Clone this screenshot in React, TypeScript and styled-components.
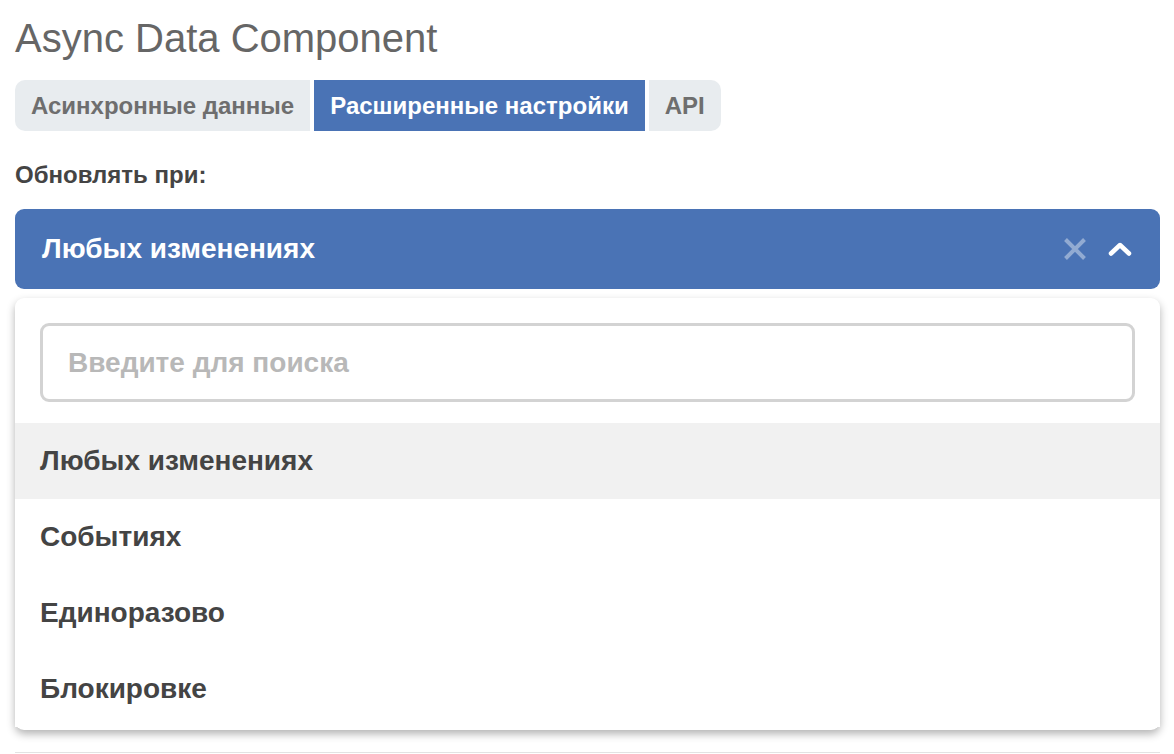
import React, { useState } from "react";
import styled, { createGlobalStyle, css } from "styled-components";

const blue = "#4a73b5";
const grey = "#444444";

const GlobalStyle = createGlobalStyle`
  html, body {
    margin: 0;
    padding: 0;
    background: #ffffff;
    font-family: "Liberation Sans", Arial, sans-serif;
  }
`;

const tabs = ["Асинхронные данные", "Расширенные настройки", "API"];
const options = ["Любых изменениях", "Событиях", "Единоразово", "Блокировке"];

export default function App() {
  const [tab, setTab] = useState(1);
  const [value, setValue] = useState(options[0]);
  return (
    <Page>
      <GlobalStyle />
      <Title>Async Data Component</Title>
      <TabBar>
        {tabs.map((t, i) => (
          <Tab key={t} active={i === tab} onClick={() => setTab(i)}>
            {t}
          </Tab>
        ))}
      </TabBar>
      <Label>Обновлять при:</Label>
      <SelectBox>
        <SelectControl>
          <SelectValue>{value}</SelectValue>
          <Indicators>
            <svg width="24" height="24" viewBox="0 0 24 24">
              <path
                d="M2.5 2.5 L21.5 21.5 M21.5 2.5 L2.5 21.5"
                stroke="rgba(255,255,255,0.4)"
                strokeWidth="4"
              />
            </svg>
            <svg width="24" height="14" viewBox="0 0 24 14">
              <path
                d="M3 11.5 L12 3 L21 11.5"
                stroke="#ffffff"
                strokeWidth="4.5"
                fill="none"
                strokeLinecap="round"
                strokeLinejoin="round"
              />
            </svg>
          </Indicators>
        </SelectControl>
        <Menu>
          <SearchWrap>
            <SearchInput placeholder="Введите для поиска" autoFocus />
          </SearchWrap>
          <OptionList>
            {options.map(o => (
              <Option key={o} focused={o === value} onClick={() => setValue(o)}>
                {o}
              </Option>
            ))}
          </OptionList>
        </Menu>
      </SelectBox>
      <Rule />
    </Page>
  );
}

const Page = styled.div`
  padding: 14px 14px 0 15px;
  display: flex;
  flex-direction: column;
  height: 754px;
  box-sizing: border-box;
  overflow: hidden;
`;

const Title = styled.h1`
  margin: 0;
  font-weight: normal;
  font-size: 40px;
  line-height: 48px;
  color: #666666;
`;

const TabBar = styled.div`
  display: flex;
  gap: 4px;
  margin-top: 18px;
`;

const Tab = styled.div<{ active: boolean }>`
  height: 51px;
  display: flex;
  align-items: center;
  padding: 0 16px;
  font-size: 24px;
  font-weight: bold;
  cursor: pointer;
  background: #e8ecef;
  color: #6e6e6e;
  &:first-child {
    border-radius: 10px 0 0 10px;
  }
  &:last-child {
    border-radius: 0 10px 10px 0;
  }
  ${p =>
    p.active &&
    css`
      background: ${blue};
      color: #ffffff;
    `}
`;

const Label = styled.div`
  margin-top: 30px;
  font-size: 24px;
  font-weight: bold;
  color: ${grey};
  line-height: 28px;
`;

const SelectBox = styled.div`
  margin-top: 20px;
  position: relative;
  width: 1145px;
`;

const SelectControl = styled.div`
  height: 80px;
  background: ${blue};
  border-radius: 9px;
  display: flex;
  align-items: center;
  justify-content: space-between;
  padding: 0 28px 0 27px;
  box-sizing: border-box;
`;

const SelectValue = styled.div`
  color: #ffffff;
  font-size: 28px;
  font-weight: bold;
`;

const Indicators = styled.div`
  display: flex;
  align-items: center;
  gap: 21px;
`;

const Menu = styled.div`
  position: absolute;
  top: 89px;
  left: 0;
  right: 0;
  background: #ffffff;
  border-radius: 9px;
  box-shadow: 0 4px 9px rgba(0, 0, 0, 0.3);
  padding-top: 25px;
  padding-bottom: 3px;
  z-index: 2;
`;

const SearchWrap = styled.div`
  padding: 0 25px;
`;

const SearchInput = styled.input`
  width: 100%;
  box-sizing: border-box;
  height: 79px;
  border: 3px solid #d3d3d3;
  border-radius: 9px;
  padding: 0 25px;
  font-family: "Liberation Sans", Arial, sans-serif;
  font-size: 28px;
  font-weight: bold;
  color: ${grey};
  caret-color: #000000;
  outline: none;
  &::placeholder {
    color: #b8b8b8;
  }
`;

const OptionList = styled.div`
  margin-top: 21px;
  display: flex;
  flex-direction: column;
`;

const Option = styled.div<{ focused: boolean }>`
  height: 76px;
  display: flex;
  align-items: center;
  padding: 0 25px;
  font-size: 28px;
  font-weight: bold;
  color: ${grey};
  cursor: pointer;
  background: ${p => (p.focused ? "#f1f1f1" : "#ffffff")};
`;

const Rule = styled.div`
  margin-top: 463px;
  width: 1145px;
  border-top: 1px solid #e3e3e3;
`;
